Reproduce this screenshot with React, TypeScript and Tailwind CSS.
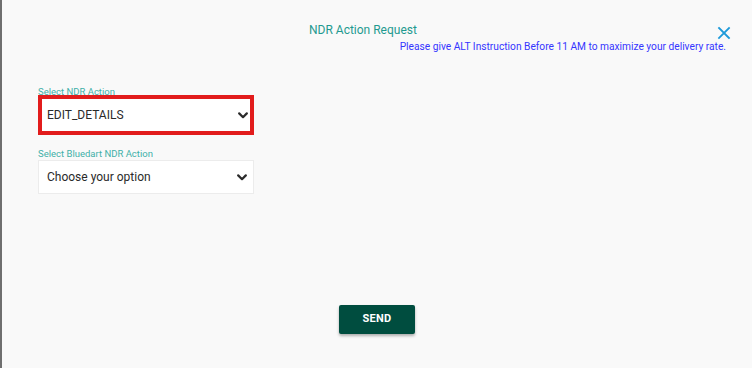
import React from 'react';

const Chevron: React.FC = () => (
  <svg width="10" height="7" viewBox="0 0 10 7" className="shrink-0">
    <path d="M1.2 1.4 L5 5.2 L8.8 1.4" fill="none" stroke="#2b2b2b" strokeWidth="2.2" strokeLinecap="round" strokeLinejoin="round" />
  </svg>
);

const fields = [
  { label: 'Select NDR Action', value: 'EDIT_DETAILS', active: true },
  { label: 'Select Bluedart NDR Action', value: 'Choose your option', active: false },
];

const App: React.FC = () => {
  return (
    <div className="flex h-[368px] w-[752px] overflow-hidden bg-[#f9f9f9] font-['Roboto','Liberation_Sans',sans-serif]">
      <div className="w-[2px] shrink-0 bg-[#6f6f6f]" />
      <div className="flex flex-1 flex-col">
        <div className="flex items-start justify-between pl-[307px] pr-[21px] pt-[22px]">
          <h2 className="text-[12px] leading-[16px] text-[#1f9a90]">NDR Action Request</h2>
          <button className="mt-[4px] text-[#1e9ad9]">
            <svg width="14" height="14" viewBox="0 0 14 14">
              <path d="M2 2 L12 12 M12 2 L2 12" stroke="currentColor" strokeWidth="1.8" strokeLinecap="square" />
            </svg>
          </button>
        </div>
        <p className="mt-[1px] pr-[26px] text-right text-[10.2px] leading-[12px] text-[#3535ff]">
          Please give ALT Instruction Before 11 AM to maximize your delivery rate.
        </p>

        <div className="mt-[33px] flex w-[252px] flex-col pl-[36px]">
          {fields.map((f, i) => (
            <div key={i} className={i === 0 ? '' : 'mt-[13px]'}>
              <label className="block text-[9.5px] leading-[11px] text-[#3fb0a8]">{f.label}</label>
              <div
                className={
                  f.active
                    ? 'mt-[-2px] flex h-[40px] items-center justify-between border-4 border-[#e21c1c] bg-white pl-[5px] pr-[2px]'
                    : 'mt-[1px] flex h-[34px] items-center justify-between border border-[#ececec] bg-white pl-[8px] pr-[6px]'
                }
              >
                <span className="text-[12px] text-[#2a2a2a]">{f.value}</span>
                <Chevron />
              </div>
            </div>
          ))}
        </div>

        <div className="mt-auto mb-[34px] flex justify-center">
          <button className="h-[29px] w-[76px] rounded-[2px] bg-[#004d3f] text-[11px] font-bold tracking-wide text-white shadow-[0_2px_3px_rgba(0,0,0,0.3)]">
            SEND
          </button>
        </div>
      </div>
    </div>
  );
};

export default App;
